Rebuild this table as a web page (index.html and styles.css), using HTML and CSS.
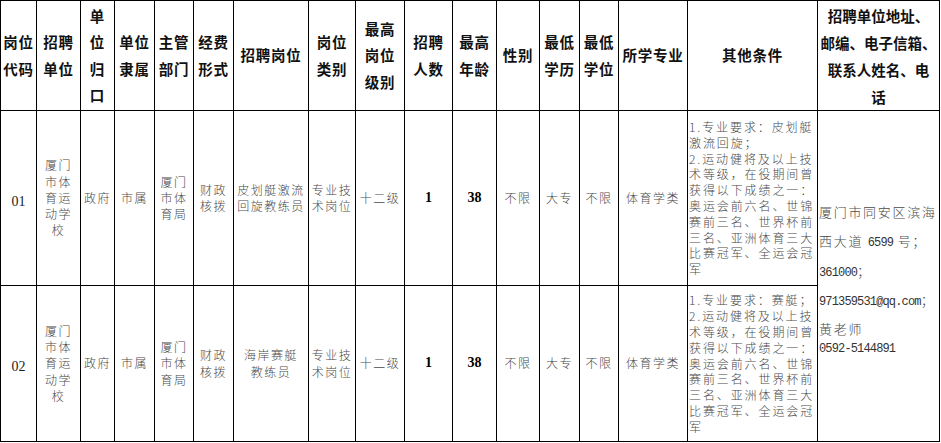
FILE: index.html
```html
<!DOCTYPE html>
<html lang="zh-CN">
<head>
<meta charset="utf-8">
<title>招聘岗位表</title>
<link rel="stylesheet" href="styles.css">
</head>
<body>
<table class="jobs">
  <colgroup>
    <col class="w36"><col class="w44"><col class="w34"><col class="w40"><col class="w39"><col class="w40"><col class="w75"><col class="w47"><col class="w49"><col class="w48"><col class="w44"><col class="w43"><col class="w40"><col class="w39"><col class="w69"><col class="w130"><col class="w122">
  </colgroup>
  <thead>
    <tr class="head">
      <th>岗位<br>代码</th>
      <th>招聘<br>单位</th>
      <th>单<br>位<br>归<br>口</th>
      <th>单位<br>隶属</th>
      <th>主管<br>部门</th>
      <th>经费<br>形式</th>
      <th>招聘岗位</th>
      <th>岗位<br>类别</th>
      <th>最高<br>岗位<br>级别</th>
      <th>招聘<br>人数</th>
      <th>最高<br>年龄</th>
      <th>性别</th>
      <th>最低<br>学历</th>
      <th>最低<br>学位</th>
      <th>所学专业</th>
      <th>其他条件</th>
      <th class="contact-head">招聘单位地址、<br>邮编、电子信箱、<br>联系人姓名、电<br>话</th>
    </tr>
  </thead>
  <tbody>
    <tr class="row1">
      <td class="code">01</td>
      <td class="tall">厦门<br>市体<br>育运<br>动学<br>校</td>
      <td>政府</td>
      <td>市属</td>
      <td class="tall">厦门<br>市体<br>育局</td>
      <td class="tall">财政<br>核拨</td>
      <td class="tall">皮划艇激流<br>回旋教练员</td>
      <td class="tall">专业技<br>术岗位</td>
      <td>十二级</td>
      <td class="num">1</td>
      <td class="num">38</td>
      <td>不限</td>
      <td>大专</td>
      <td>不限</td>
      <td>体育学类</td>
      <td class="cond">1.专业要求：皮划艇<br>激流回旋；<br>2.运动健将及以上技<br>术等级，在役期间曾<br>获得以下成绩之一：<br>奥运会前六名、世锦<br>赛前三名、世界杯前<br>三名、亚洲体育三大<br>比赛冠军、全运会冠<br>军</td>
      <td class="contact" rowspan="2">
        <div class="addr">
          <div>厦门市同安区滨海</div>
          <div>西大道 <span class="asc">6599</span> 号；</div>
          <div><span class="asc">361000</span>；</div>
          <div><span class="asc">971359531@qq.com</span>；</div>
        </div>
        <div class="person">
          <div>黄老师</div>
          <div><span class="asc">0592-5144891</span></div>
        </div>
      </td>
    </tr>
    <tr class="row2">
      <td class="code">02</td>
      <td class="tall">厦门<br>市体<br>育运<br>动学<br>校</td>
      <td>政府</td>
      <td>市属</td>
      <td class="tall">厦门<br>市体<br>育局</td>
      <td class="tall">财政<br>核拨</td>
      <td class="tall">海岸赛艇<br>教练员</td>
      <td class="tall">专业技<br>术岗位</td>
      <td>十二级</td>
      <td class="num">1</td>
      <td class="num">38</td>
      <td>不限</td>
      <td>大专</td>
      <td>不限</td>
      <td>体育学类</td>
      <td class="cond">1.专业要求：赛艇；<br>2.运动健将及以上技<br>术等级，在役期间曾<br>获得以下成绩之一：<br>奥运会前六名、世锦<br>赛前三名、世界杯前<br>三名、亚洲体育三大<br>比赛冠军、全运会冠<br>军</td>
    </tr>
  </tbody>
</table>
</body>
</html>
```

FILE: styles.css
```css
html, body {
  margin: 0;
  padding: 0;
  background: #fff;
}

.jobs {
  border-collapse: collapse;
  table-layout: fixed;
  width: 939px;
  font-family: "Liberation Serif", "Noto Sans CJK SC", serif;
  color: #4a4a4a;
}

.w36 { width: 36px; }
.w44 { width: 44px; }
.w34 { width: 34px; }
.w40 { width: 40px; }
.w39 { width: 39px; }
.w75 { width: 75px; }
.w47 { width: 47px; }
.w49 { width: 49px; }
.w48 { width: 48px; }
.w43 { width: 43px; }
.w69 { width: 69px; }
.w130 { width: 130px; }
.w122 { width: 122px; }

.jobs th,
.jobs td {
  border: 1px solid #000;
  padding: 0 1px;
  text-align: center;
  vertical-align: middle;
  overflow: visible;
}

.jobs th {
  font-family: "Noto Sans CJK SC", sans-serif;
  font-weight: 700;
  font-size: 14.5px;
  line-height: 26.5px;
  letter-spacing: 0.8px;
  color: #111;
  white-space: nowrap;
}

.jobs th.contact-head {
  letter-spacing: 0;
  font-size: 14.5px;
  line-height: 27px;
}

.head { height: 110px; }
.row1 { height: 175px; }
.row2 { height: 156px; }

.jobs td {
  font-family: "Noto Sans CJK SC", sans-serif;
  font-weight: 300;
  font-size: 12px;
  letter-spacing: 1.5px;
  line-height: 16.3px;
  white-space: nowrap;
}

.jobs td.code {
  font-family: "Liberation Serif", serif;
  font-weight: 400;
  font-size: 14px;
  letter-spacing: 0;
  color: #222;
  padding-top: 8px;
}

.jobs td.num {
  font-family: "Liberation Serif", serif;
  font-weight: 700;
  font-size: 14px;
  letter-spacing: 0;
  color: #000;
}

.jobs td.cond {
  text-align: left;
  font-size: 12px;
  letter-spacing: 1.9px;
  line-height: 15.8px;
  padding: 0 0 0 1px;
}

.jobs td.contact {
  text-align: left;
  font-size: 13px;
  letter-spacing: 1.7px;
  padding: 0 0 0 1px;
}

.addr div {
  line-height: 29.5px;
}

.person {
  margin-top: 5px;
}

.person div {
  line-height: 18px;
}

.asc {
  font-family: "Liberation Mono", monospace;
  font-size: 12px;
  letter-spacing: -0.85px;
  font-weight: 400;
  line-height: 12px;
  color: #333;
}
```
